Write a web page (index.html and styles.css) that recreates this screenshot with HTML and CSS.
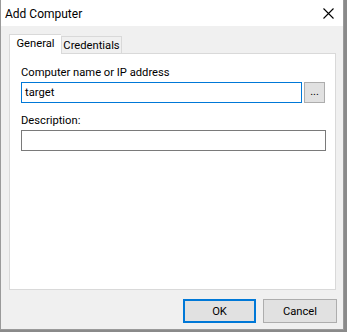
FILE: index.html
```html
<!DOCTYPE html>
<html>
<head>
<meta charset="utf-8">
<link rel="stylesheet" href="styles.css">
</head>
<body>
<div class="window">
  <div class="titlebar">
    <span class="title">Add Computer</span>
    <svg class="close" width="11" height="11" viewBox="0 0 11 11"><path d="M0.5 0.5 L10.5 10.5 M10.5 0.5 L0.5 10.5" stroke="#000" stroke-width="1.1" fill="none"/></svg>
  </div>
  <div class="content">
    <div class="tabs">
      <div class="tab active">General</div>
      <div class="tab cred">Credentials</div>
    </div>
    <div class="panel">
      <label class="label">Computer name or IP address</label>
      <div class="row">
        <div class="input focused">target</div>
        <div class="btn small">...</div>
      </div>
      <label class="label desc">Description:</label>
      <div class="input wide"></div>
    </div>
    <div class="buttons">
      <div class="btn default">OK</div>
      <div class="btn cancel">Cancel</div>
    </div>
  </div>
</div>
</body>
</html>
```
FILE: styles.css
```css
* { box-sizing: border-box; }
html, body { margin: 0; padding: 0; }
body {
  width: 347px; height: 332px;
  background: #8a8a8a;
  font-family: Roboto, "Liberation Sans", Arial, sans-serif;
  font-size: 11.2px;
  color: #000;
  overflow: hidden;
}
.window {
  width: 344px; height: 330px;
  background: #f0f0f0;
  border: 1px solid #9a9a9a;
  border-top: none;
  display: flex; flex-direction: column;
}
.titlebar {
  height: 26px; background: #fff;
  display: flex; align-items: center; justify-content: space-between;
  padding: 0 9px 0 4px;
}
.title { font-size: 12px; color: #000; padding-top: 1px; }
.content { padding: 8px 6px 0 8px; display: flex; flex-direction: column; }
.tabs { display: flex; align-items: flex-end; height: 19px; position: relative; z-index: 1; }
.tab {
  height: 17px;
  background: #f0f0f0;
  border: 1px solid #d9d9d9; border-bottom: none;
  display: flex; align-items: center; justify-content: center;
}
.tab.cred { width: 61px; }
.tab.active {
  width: 52px; height: 20px; background: #fff;
  margin-bottom: -1px; border-right: none;
  align-items: flex-start; padding-top: 2px;
}
.panel {
  height: 237px; width: 327px;
  background: #fff; border: 1px solid #d9d9d9;
  padding: 11px 8px 0 11px;
  display: flex; flex-direction: column;
}
.label { display: block; height: 15px; line-height: 15px; margin-bottom: 2px; }
.label.desc { margin-top: 10px; }
.row { display: flex; gap: 2px; }
.input {
  height: 21px; border: 1px solid #7a7a7a; background: #fff;
  padding: 2px 3px; line-height: 15px;
}
.input.focused { border-color: #0078d7; width: 281px; }
.input.wide { width: 305px; }
.btn {
  background: #e1e1e1; border: 1px solid #adadad;
  display: flex; align-items: center; justify-content: center;
}
.btn.small { width: 21px; height: 21px; font-size: 11px; padding-bottom: 2px; }
.buttons { display: flex; justify-content: flex-end; gap: 7px; margin-top: 9px; }
.btn.default { width: 73px; height: 24px; border: 2px solid #0078d7; }
.btn.cancel { width: 74px; height: 24px; }
```
